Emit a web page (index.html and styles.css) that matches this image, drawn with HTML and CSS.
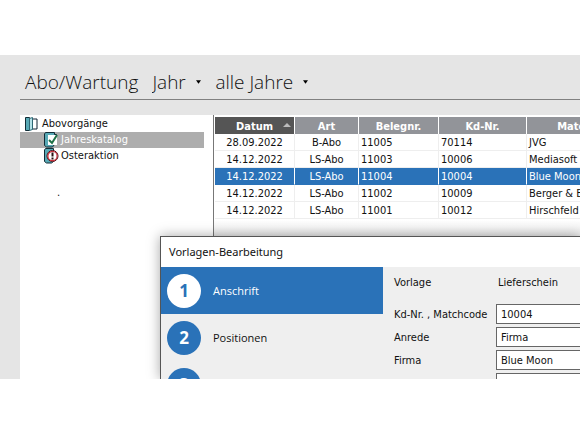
FILE: index.html
```
<!DOCTYPE html>
<html lang="de">
<head>
<meta charset="utf-8">
<title>Abo/Wartung</title>
<link rel="stylesheet" href="styles.css">
</head>
<body>
<main class="app">
  <header class="toolbar">
    <h1 class="heading">Abo/Wartung</h1>
    <div class="picker">
      <select aria-label="Zeitraum"><option>Jahr</option></select>
      <svg class="caret" viewBox="0 0 6 4" aria-hidden="true"><path d="M0 0h6L3 4z"/></svg>
    </div>
    <div class="picker">
      <select aria-label="Jahr"><option>alle Jahre</option></select>
      <svg class="caret" viewBox="0 0 6 4" aria-hidden="true"><path d="M0 0h6L3 4z"/></svg>
    </div>
  </header>
  <div class="panes">
    <nav class="tree">
      <button class="node" type="button">
        <svg class="icon" viewBox="0 0 16 16" aria-hidden="true">
          <path d="M8 3h5v10H8z" fill="#fff" stroke="#123" />
          <path d="M1.500 1.500h4v13h-4z" fill="#58a9b5" stroke="#102c36"/>
          <path d="M5.500 2.500l3-1v12l-3 1z" fill="#b5e2e8" stroke="#2f6874"/>
        </svg>Abovorgänge</button>
      <button class="node child selected" type="button">
        <svg class="icon" viewBox="0 0 16 16" aria-hidden="true">
          <path d="M1.500 2l1-1.500h9v2h2v10h-2l-2 2.500h-6l-2-1.500z" fill="#58a9b5" stroke="#102c36"/>
          <path d="M5 3h9v10H5z" fill="#fff"/>
          <path d="M6 8l3 3 5-8" fill="none" stroke="#1d7045" stroke-width="2"/>
        </svg>Jahreskatalog</button>
      <button class="node child" type="button">
        <svg class="icon" viewBox="0 0 16 16" aria-hidden="true">
          <path d="M1.500 2l1-1.500h8v13l-2 1.500h-5l-2-1.500z" fill="#58a9b5" stroke="#102c36"/>
          <circle cx="9.500" cy="8" r="5.500" fill="#fff" stroke="#3a1015" stroke-width="1"/>
          <circle cx="9.500" cy="8" r="4.600" fill="none" stroke="#c9303c" stroke-width="1.200"/>
          <path d="M9.500 4.500v4M9.500 9.500v2" stroke="#2a1010" stroke-width="2"/>
        </svg>Osteraktion</button>
      <p class="dot">.</p>
    </nav>
    <section class="list">
      <table class="grid">
        <colgroup><col class="c-date"><col class="c-type"><col class="c-doc"><col class="c-cust"><col class="c-match"></colgroup>
        <thead>
          <tr><th class="sorted" aria-sort="ascending">Datum<svg class="sort" viewBox="0 0 8 4" aria-hidden="true"><path d="M0 4h8L4 0z"/></svg></th><th>Art</th><th>Belegnr.</th><th>Kd-Nr.</th><th>Matchcode</th></tr>
        </thead>
        <tbody>
          <tr><td>28.09.2022</td><td>B-Abo</td><td>11005</td><td>70114</td><td>JVG</td></tr>
          <tr><td>14.12.2022</td><td>LS-Abo</td><td>11003</td><td>10006</td><td>Mediasoft</td></tr>
          <tr class="current"><td>14.12.2022</td><td>LS-Abo</td><td>11004</td><td>10004</td><td>Blue Moon</td></tr>
          <tr><td>14.12.2022</td><td>LS-Abo</td><td>11002</td><td>10009</td><td>Berger &amp; B</td></tr>
          <tr><td>14.12.2022</td><td>LS-Abo</td><td>11001</td><td>10012</td><td>Hirschfeld</td></tr>
        </tbody>
      </table>
    </section>
  </div>
  <section class="dialog" role="dialog" aria-labelledby="dialog-title">
    <h2 class="title" id="dialog-title">Vorlagen-Bearbeitung</h2>
    <div class="body">
      <nav class="steps">
        <button class="step active" type="button"><span class="number">1</span>Anschrift</button>
        <button class="step" type="button"><span class="number">2</span>Positionen</button>
        <button class="step" type="button" aria-label="Schritt 3"><span class="number">3</span></button>
      </nav>
      <form class="form">
        <div class="row intro"><span>Vorlage</span><output>Lieferschein</output></div>
        <div class="row"><label for="code">Kd-Nr. , Matchcode</label><input id="code" value="10004"></div>
        <div class="row"><label for="salutation">Anrede</label><input id="salutation" value="Firma"></div>
        <div class="row"><label for="company">Firma</label><input id="company" value="Blue Moon"></div>
        <div class="row"><span></span><input aria-label="Firma, Zeile 2"></div>
      </form>
    </div>
  </section>
</main>
</body>
</html>
```
FILE: styles.css
```
* { box-sizing: border-box; }

body {
  margin: 0;
  padding: 55px 0 56px;
  height: 100vh;
  background: #fff;
  color: #111;
  font: 11px/17px "DejaVu Sans Condensed", "DejaVu Sans", sans-serif;
  overflow: hidden;
}

button, input, select {
  font: inherit;
  color: inherit;
  border: 0;
  border-radius: 0;
  margin: 0;
  padding: 0;
  background: none;
}

.app {
  position: relative;
  height: 100%;
  display: flex;
  flex-direction: column;
  padding-left: 20px;
  background: #e5e5e5;
  overflow: hidden;
}

.toolbar {
  display: flex;
  align-items: center;
  gap: 14px;
  height: 45px;
  padding: 10px 0 0 5px;
  margin-bottom: 15px;
  border-bottom: 1px solid #808080;
  font: 300 19px/28px "Open Sans", sans-serif;
  color: #111;
}

.heading { margin: 0; font: inherit; }
.picker { display: flex; align-items: center; gap: 10px; }
.picker select { appearance: none; }
.caret { width: 5px; height: 4px; }

.panes { flex: 1; display: flex; min-height: 0; }

.tree {
  flex: 0 0 194px;
  padding-top: 1px;
  background: #fff;
  border-right: 1px solid #777;
}

.node {
  display: flex;
  align-items: center;
  gap: 2px;
  width: 184px;
  height: 16px;
  padding-left: 4px;
  line-height: 16px;
}

.child { padding-left: 23px; }
.selected { background: #adadad; color: #fff; }
.icon { width: 16px; height: 16px; flex: none; }
.dot { margin: 20px 0 0 37px; }

.list {
  flex: 1;
  min-width: 0;
  padding: 2px 0 0 1px;
  background: linear-gradient(#fff 105px, #e8e8e8 122px);
  overflow: hidden;
}

.grid {
  width: 434px;
  table-layout: fixed;
  border-spacing: 0;
}

.c-date { width: 80px; }
.c-type { width: 64px; }
.c-doc { width: 80px; }
.c-cust { width: 88px; }
.c-match { width: 122px; }

.grid th, .grid td { height: 17px; padding: 1px 2px 0; line-height: 15px; }

.grid th {
  background: #929499;
  color: #fff;
  border-right: 1px solid #fff;
  font-weight: bold;
}

.grid .sorted { position: relative; background: #555; }
.sort { position: absolute; right: 3px; top: 6px; width: 8px; height: 4px; fill: #bbb; }

.grid td {
  border-right: 1px solid #eee;
  border-bottom: 1px solid #eee;
  white-space: nowrap;
}

.grid td:nth-child(-n+2) { text-align: center; }
.grid .current td { background: #2a72b8; color: #fff; border-right-color: #fff; border-bottom-color: #2a72b8; }

.dialog {
  position: absolute;
  left: 160px;
  right: 0;
  top: 181px;
  bottom: 0;
  background: #efefef;
  border: solid #555;
  border-width: 1px 0 0 1px;
  box-shadow: 0 0 12px rgba(0, 0, 0, 0.35);
}

.title {
  margin: 0;
  padding-left: 8px;
  background: #fff;
  font: 11px/30px "Noto Sans", sans-serif;
}

.body { display: flex; }
.steps { flex: 0 0 222px; }

.step {
  display: flex;
  align-items: center;
  gap: 12px;
  width: 100%;
  height: 47px;
  padding-left: 6px;
  font: 11px/16px "Open Sans", sans-serif;
}

.number {
  width: 34px;
  height: 34px;
  border-radius: 50%;
  background: #2a72b8;
  color: #fff;
  font: bold 17px/34px "Open Sans", sans-serif;
  text-align: center;
}

.active { background: #2a72b8; color: #fff; }
.active .number { background: #fff; color: #2a72b8; }

.form {
  flex: 1;
  min-width: 0;
  display: grid;
  align-content: start;
  gap: 3px;
  padding: 7px 0 0 11px;
}

.row {
  display: grid;
  grid-template-columns: 102px 1fr;
  align-items: center;
}

.intro { height: 27px; align-items: start; }
.intro output { padding-left: 2px; }

.row input {
  width: 100%;
  height: 20px;
  padding: 0 4px;
  background: #fff;
  border: solid #666;
  border-width: 1px 0 1px 1px;
}
```
